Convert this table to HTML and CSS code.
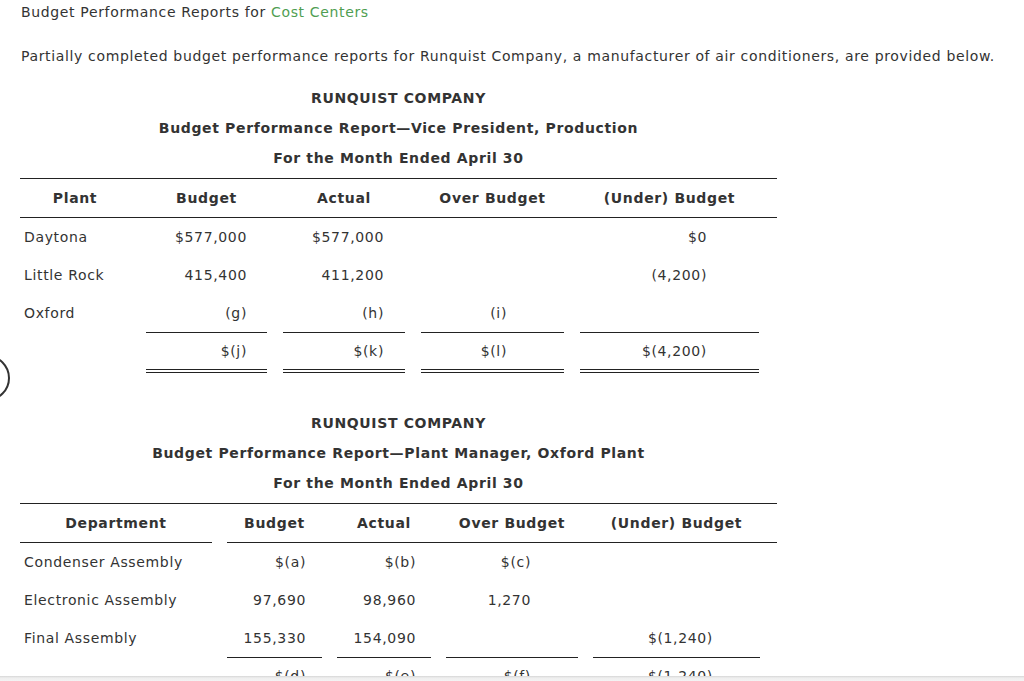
FILE: index.html
```html
<!DOCTYPE html>
<html lang="en">
<head>
<meta charset="utf-8">
<title>Budget Performance Reports for Cost Centers</title>
<link rel="stylesheet" href="styles.css">
</head>
<body>
<div class="page">
  <div class="heading">Budget Performance Reports for <span class="green">Cost Centers</span></div>
  <p class="intro">Partially completed budget performance reports for Runquist Company, a manufacturer of air conditioners, are provided below.</p>

  <div class="report report-vp">
    <div class="titles">
      <div>RUNQUIST COMPANY</div>
      <div>Budget Performance Report—Vice President, Production</div>
      <div>For the Month Ended April 30</div>
    </div>
    <div class="grid">
      <div class="rule full"></div>
      <div class="th">Plant</div>
      <div class="th">Budget</div>
      <div class="th">Actual</div>
      <div class="th">Over Budget</div>
      <div class="th">(Under) Budget</div>
      <div class="th"></div>
      <div class="rule full"></div>

      <div class="td name">Daytona</div>
      <div class="td num c2">$577,000</div>
      <div class="td num c3">$577,000</div>
      <div class="td num c4"></div>
      <div class="td num c5">$0</div>
      <div class="td"></div>

      <div class="td name">Little Rock</div>
      <div class="td num c2">415,400</div>
      <div class="td num c3">411,200</div>
      <div class="td num c4"></div>
      <div class="td num c5">(4,200)</div>
      <div class="td"></div>

      <div class="td name">Oxford</div>
      <div class="td num c2">(g)</div>
      <div class="td num c3">(h)</div>
      <div class="td num c4">(i)</div>
      <div class="td num c5"></div>
      <div class="td"></div>

      <div class="td"></div>
      <div class="td num c2 total">$(j)</div>
      <div class="td num c3 total">$(k)</div>
      <div class="td num c4 total">$(l)</div>
      <div class="td num c5 total">$(4,200)</div>
      <div class="td"></div>
    </div>
  </div>

  <div class="report report-pm">
    <div class="titles">
      <div>RUNQUIST COMPANY</div>
      <div>Budget Performance Report—Plant Manager, Oxford Plant</div>
      <div>For the Month Ended April 30</div>
    </div>
    <div class="grid">
      <div class="rule full"></div>
      <div class="th">Department</div>
      <div class="th">Budget</div>
      <div class="th">Actual</div>
      <div class="th">Over Budget</div>
      <div class="th">(Under) Budget</div>
      <div class="th"></div>
      <div class="rule first"></div>
      <div class="rule rest"></div>

      <div class="td name">Condenser Assembly</div>
      <div class="td num c2">$(a)</div>
      <div class="td num c3">$(b)</div>
      <div class="td num c4">$(c)</div>
      <div class="td num c5"></div>
      <div class="td"></div>

      <div class="td name">Electronic Assembly</div>
      <div class="td num c2">97,690</div>
      <div class="td num c3">98,960</div>
      <div class="td num c4">1,270</div>
      <div class="td num c5"></div>
      <div class="td"></div>

      <div class="td name">Final Assembly</div>
      <div class="td num c2">155,330</div>
      <div class="td num c3">154,090</div>
      <div class="td num c4"></div>
      <div class="td num c5">$(1,240)</div>
      <div class="td"></div>

      <div class="td"></div>
      <div class="td num c2 total">$(d)</div>
      <div class="td num c3 total">$(e)</div>
      <div class="td num c4 total">$(f)</div>
      <div class="td num c5 total">$(1,240)</div>
      <div class="td"></div>
    </div>
  </div>
</div>
<div class="nav-circle"></div>
<div class="bottom-bar"></div>
</body>
</html>
```

FILE: styles.css
```css
html, body {
  margin: 0;
  padding: 0;
  background: #fff;
}

body {
  font-family: "DejaVu Sans", Verdana, sans-serif;
  font-size: 14px;
  letter-spacing: 0.65px;
  color: #333;
  overflow: hidden;
}

.page {
  padding: 2px 0 0 20px;
}

.heading {
  line-height: 20px;
  padding-left: 1px;
}

.green {
  color: #4f9e52;
}

.intro {
  margin: 24px 0 0 0;
  line-height: 20px;
  padding-left: 1px;
}

.report {
  width: 757px;
}

.report-vp {
  margin-top: 17px;
}

.report-pm {
  margin-top: 35px;
}

.titles {
  text-align: center;
  font-weight: bold;
  line-height: 30px;
  margin-bottom: 5px;
}

.grid {
  display: grid;
}

.report-vp .grid {
  grid-template-columns: 110px 121px 122px 143px 179px 2px;
  column-gap: 16px;
}

.report-pm .grid {
  grid-template-columns: 192px 95px 94px 132px 167px 2px;
  column-gap: 15px;
}

.rule {
  height: 1px;
  background: #222;
}

.rule.full {
  grid-column: 1 / -1;
}

.rule.first {
  grid-column: 1 / 2;
}

.rule.rest {
  grid-column: 2 / -1;
}

.th {
  font-weight: bold;
  text-align: center;
  height: 38px;
  line-height: 38px;
  white-space: nowrap;
}

.td {
  height: 38px;
  line-height: 38px;
  white-space: nowrap;
}

.name {
  padding-left: 4px;
}

.num {
  text-align: right;
}

.total {
  border-top: 1px solid #222;
  border-bottom: 4px double #222;
  height: 36px;
  line-height: 36px;
}

.report-vp .c2 { padding-right: 20px; }
.report-vp .c3 { padding-right: 21px; }
.report-vp .c4 { padding-right: 57px; }
.report-vp .c5 { padding-right: 52px; }

.report-pm .c2 { padding-right: 16px; }
.report-pm .c3 { padding-right: 15px; }
.report-pm .c4 { padding-right: 47px; }
.report-pm .c5 { padding-right: 47px; }

.nav-circle {
  position: absolute;
  left: -36px;
  top: 355px;
  width: 42px;
  height: 42px;
  border: 2px solid #333;
  border-radius: 50%;
}

.bottom-bar {
  position: fixed;
  left: 0;
  right: 0;
  bottom: 0;
  height: 5px;
  background: linear-gradient(#d6d6d6, #efefef 40%, #f3f3f3);
}
```
